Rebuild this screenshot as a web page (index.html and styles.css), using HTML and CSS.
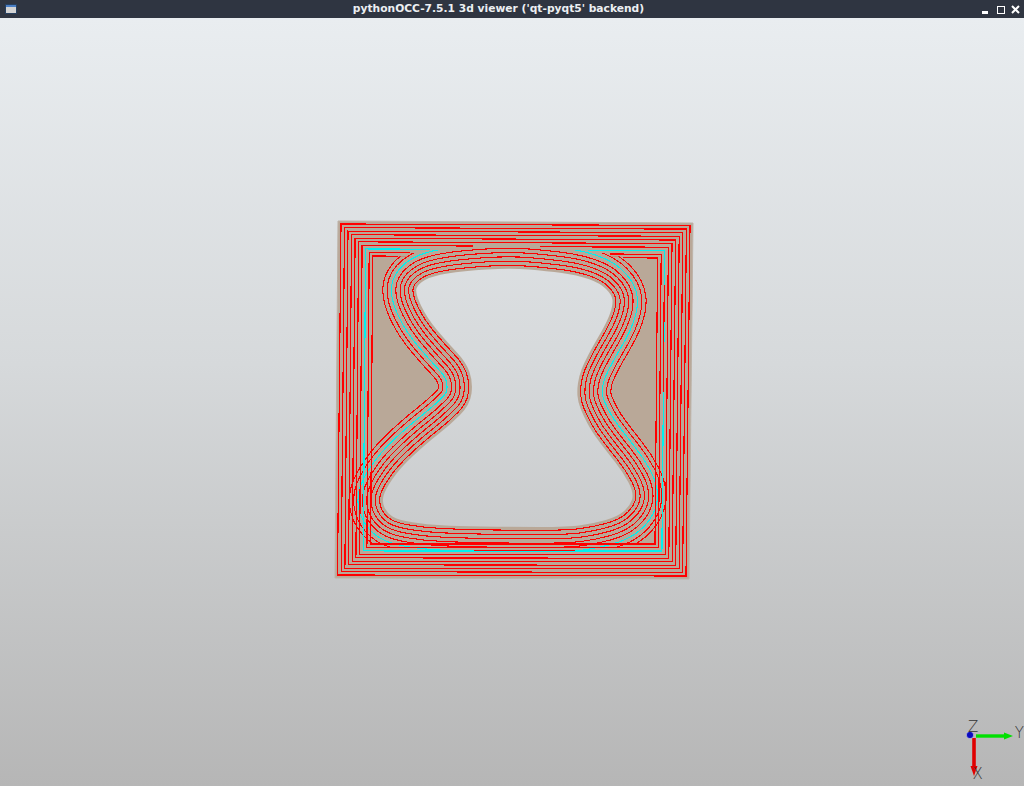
FILE: index.html
```html
<!DOCTYPE html>
<html lang="en">
<head>
<meta charset="utf-8">
<title>pythonOCC-7.5.1 3d viewer</title>
<link rel="stylesheet" href="styles.css">
</head>
<body>
<div class="window">
  <header class="titlebar">
    <svg class="app-icon" width="12" height="10" viewBox="0 0 12 10">
      <rect class="icon-frame" x="0" y="0" width="12" height="10"/>
      <rect class="icon-head" x="1" y="1" width="10" height="2"/>
      <rect class="icon-body" x="1" y="3" width="10" height="6"/>
    </svg>
    <div class="title">pythonOCC-7.5.1 3d viewer ('qt-pyqt5' backend)</div>
    <div class="controls">
      <svg width="9" height="9" viewBox="0 0 9 9"><rect class="ctl-fill" x="1" y="6" width="6" height="3"/></svg>
      <svg width="9" height="9" viewBox="0 0 9 9"><rect class="ctl-line" x="1" y="1" width="7" height="7"/></svg>
      <svg width="9" height="9" viewBox="0 0 9 9"><path class="ctl-x" d="M1 1L8 8M8 1L1 8"/></svg>
    </div>
  </header>
  <main class="viewport">
    <svg class="scene" width="1024" height="768" viewBox="0 18 1024 768">
      <defs>
        <path id="hole" d="M528.5 269.5Q510 268 486.5 269.5Q463 271 447.5 273.5Q432 276 425 280Q418 284 416.5 288.5Q415 293 421 305.5Q427 318 437 330Q447 342 456.5 352Q466 362 469.5 372Q473 382 471.5 393.5Q470 405 460 415Q450 425 438.5 434Q427 443 413.5 455.5Q400 468 392.5 479Q385 490 383.5 496Q382 502 384.5 507.5Q387 513 392.5 516.5Q398 520 412.5 522.2Q427 524.5 442 525.2Q457 526 483.5 526.5Q510 527 539 527Q568 527 580.5 525.2Q593 523.5 605 520.2Q617 517 623.5 511.5Q630 506 632 499.5Q634 493 628.5 482.5Q623 472 615 462Q607 452 599.5 442Q592 432 587.5 423.5Q583 415 580.5 408.5Q578 402 577.5 396Q577 390 578 383Q579 376 581.5 369.5Q584 363 588.5 354.5Q593 346 600 334Q607 322 610 313.5Q613 305 612.5 300Q612 295 606 289Q600 283 588.5 279Q577 275 562 273Q547 271 528.5 269.5Z"/>
        <mask id="cut" maskUnits="userSpaceOnUse" x="0" y="0" width="1024" height="786">
          <rect class="mask-keep" x="0" y="0" width="1024" height="786"/>
          <use href="#hole" class="mask-cut"/>
        </mask>
        <clipPath id="band5"><rect x="320" y="247.5" width="400" height="307"/></clipPath>
        <clipPath id="band6"><rect x="320" y="250" width="400" height="301"/></clipPath>
        <clipPath id="band7"><rect x="320" y="253" width="400" height="294.5"/></clipPath>
        <clipPath id="band8"><rect x="320" y="256.2" width="400" height="288"/></clipPath>
      </defs>

      <g mask="url(#cut)">
        <polygon class="plate" points="338,221 693,223 689,579 335,578"/>
        <g class="contours">
          <g clip-path="url(#band8)">
            <use href="#hole" class="red o8"/><use href="#hole" class="tan o8"/>
          </g>
          <g clip-path="url(#band7)">
            <use href="#hole" class="red o7"/><use href="#hole" class="tan o7"/>
          </g>
          <g clip-path="url(#band6)">
            <use href="#hole" class="cyan o6"/><use href="#hole" class="tan o6"/>
          </g>
          <g clip-path="url(#band5)">
            <use href="#hole" class="red o5"/><use href="#hole" class="tan o5"/>
          </g>
          <use href="#hole" class="red o4"/><use href="#hole" class="tan o4"/>
          <use href="#hole" class="red o3"/><use href="#hole" class="tan o3"/>
          <use href="#hole" class="red o2"/><use href="#hole" class="tan o2"/>
          <use href="#hole" class="red o1"/><use href="#hole" class="tan o1"/>
        </g>
        <path class="ring-cyan" d="M430 249.3L365.6 248.9L363.3 550.9L661.9 551.1L664.8 250.8L588 250.3"/>
        <g class="rings">
          <path d="M341 224L690 225.5L686 576L337.5 575Z"/>
          <path d="M344.5 227.6L686.4 229.1L682.6 572.5L341.2 571.6Z"/>
          <path d="M348 231.1L682.8 232.7L679.1 568.9L344.9 568.1Z"/>
          <path d="M351.6 234.7L679.2 236.3L675.7 565.4L348.5 564.7Z"/>
          <path d="M355.1 238.2L675.6 240L672.2 561.8L352.2 561.2Z"/>
          <path d="M358.6 241.8L672 243.6L668.8 558.3L355.9 557.8Z"/>
          <path d="M473 246L362.1 245.4L359.6 554.4L665.4 554.7L668.4 247.2L540 246.7"/>
          <path d="M410 252.8L369.2 252.5L366.9 547.5L658.5 547.6L661.2 254.4L610 254"/>
          <path d="M398 256.2L372.7 256L370.6 544L655 544L657.6 258L623 257.7"/>
          <path d="M664.3 285L663.2 392"/>
          <path d="M474 550.5L575 550.6"/>
        </g>
      </g>

      <g class="trihedron">
        <path class="axis-y" d="M976 736H1006"/>
        <polygon class="head-y" points="1004,732.5 1013,736 1004,739.5"/>
        <path class="axis-x" d="M974 738V768"/>
        <polygon class="head-x" points="970.5,766 977.5,766 974,776"/>
        <circle class="origin" cx="970" cy="735" r="3.6"/>
        <text class="axis-label" x="968" y="731.5">Z</text>
        <text class="axis-label" x="1014.7" y="738">Y</text>
        <text class="axis-label" x="972.5" y="779">X</text>
      </g>
    </svg>
  </main>
</div>
</body>
</html>
```
FILE: styles.css
```css
html, body {
  margin: 0;
  padding: 0;
  overflow: hidden;
}

.window {
  display: flex;
  flex-direction: column;
  width: 1024px;
  height: 786px;
}

.titlebar {
  display: flex;
  align-items: center;
  flex: 0 0 18px;
  height: 18px;
  padding: 0 4px 0 5px;
  box-sizing: border-box;
  background: #2f3541;
}

.app-icon {
  display: block;
  flex: none;
}

.icon-frame { fill: #27405f; }
.icon-head { fill: #4a7fc6; }
.icon-body { fill: #d4d4d4; }

.title {
  flex: 1;
  text-align: center;
  color: #eceff2;
  font: bold 10.7px/18px "DejaVu Sans", sans-serif;
  white-space: nowrap;
}

.controls {
  display: flex;
  align-items: center;
  gap: 6px;
  padding-left: 1px;
}

.controls svg { display: block; }

.ctl-fill { fill: #ffffff; }
.ctl-line { fill: none; stroke: #ffffff; stroke-width: 1; shape-rendering: crispEdges; }
.ctl-x { fill: none; stroke: #ffffff; stroke-width: 2; }

.viewport {
  flex: 1;
  background: linear-gradient(to bottom, #e9edf0 0%, #d6d9db 45%, #b6b6b6 100%);
}

.scene { display: block; }

.mask-keep { fill: #fff; }
.mask-cut { fill: #000; stroke: #000; stroke-width: 0; }

.plate {
  fill: #b9a898;
  stroke: #bdb3a8;
  stroke-width: 1;
}

.contours use { fill: none; shape-rendering: crispEdges; stroke-linejoin: round; }
.contours .red { stroke: #ff0000; }
.contours .cyan { stroke: #00f0f0; }
.contours .tan { stroke: #b9a898; }

.red.o8 { stroke-width: 68.2px; } .tan.o8 { stroke-width: 66px; }
.red.o7 { stroke-width: 59.6px; } .tan.o7 { stroke-width: 57.4px; }
.cyan.o6 { stroke-width: 51px; } .tan.o6 { stroke-width: 48.8px; }
.red.o5 { stroke-width: 42.1px; } .tan.o5 { stroke-width: 39.9px; }
.red.o4 { stroke-width: 33.5px; } .tan.o4 { stroke-width: 31.3px; }
.red.o3 { stroke-width: 24.9px; } .tan.o3 { stroke-width: 22.7px; }
.red.o2 { stroke-width: 16.3px; } .tan.o2 { stroke-width: 14.1px; }
.red.o1 { stroke-width: 7.7px; } .tan.o1 { stroke-width: 5.5px; }

.rings path {
  fill: none;
  stroke: #ff0000;
  stroke-width: 1.2;
  shape-rendering: crispEdges;
}

.ring-cyan {
  fill: none;
  stroke: #00f0f0;
  stroke-width: 1.2;
  shape-rendering: crispEdges;
}

.axis-y { stroke: #00e000; stroke-width: 3.4; fill: none; }
.head-y { fill: #00e000; }
.axis-x { stroke: #e00000; stroke-width: 3.6; fill: none; }
.head-x { fill: #e00000; }
.origin { fill: #0a0ac0; stroke: #e8e8e8; stroke-width: 0.5; }

.axis-label {
  font: 300 15px "DejaVu Sans", sans-serif;
  fill: #333;
}
```
